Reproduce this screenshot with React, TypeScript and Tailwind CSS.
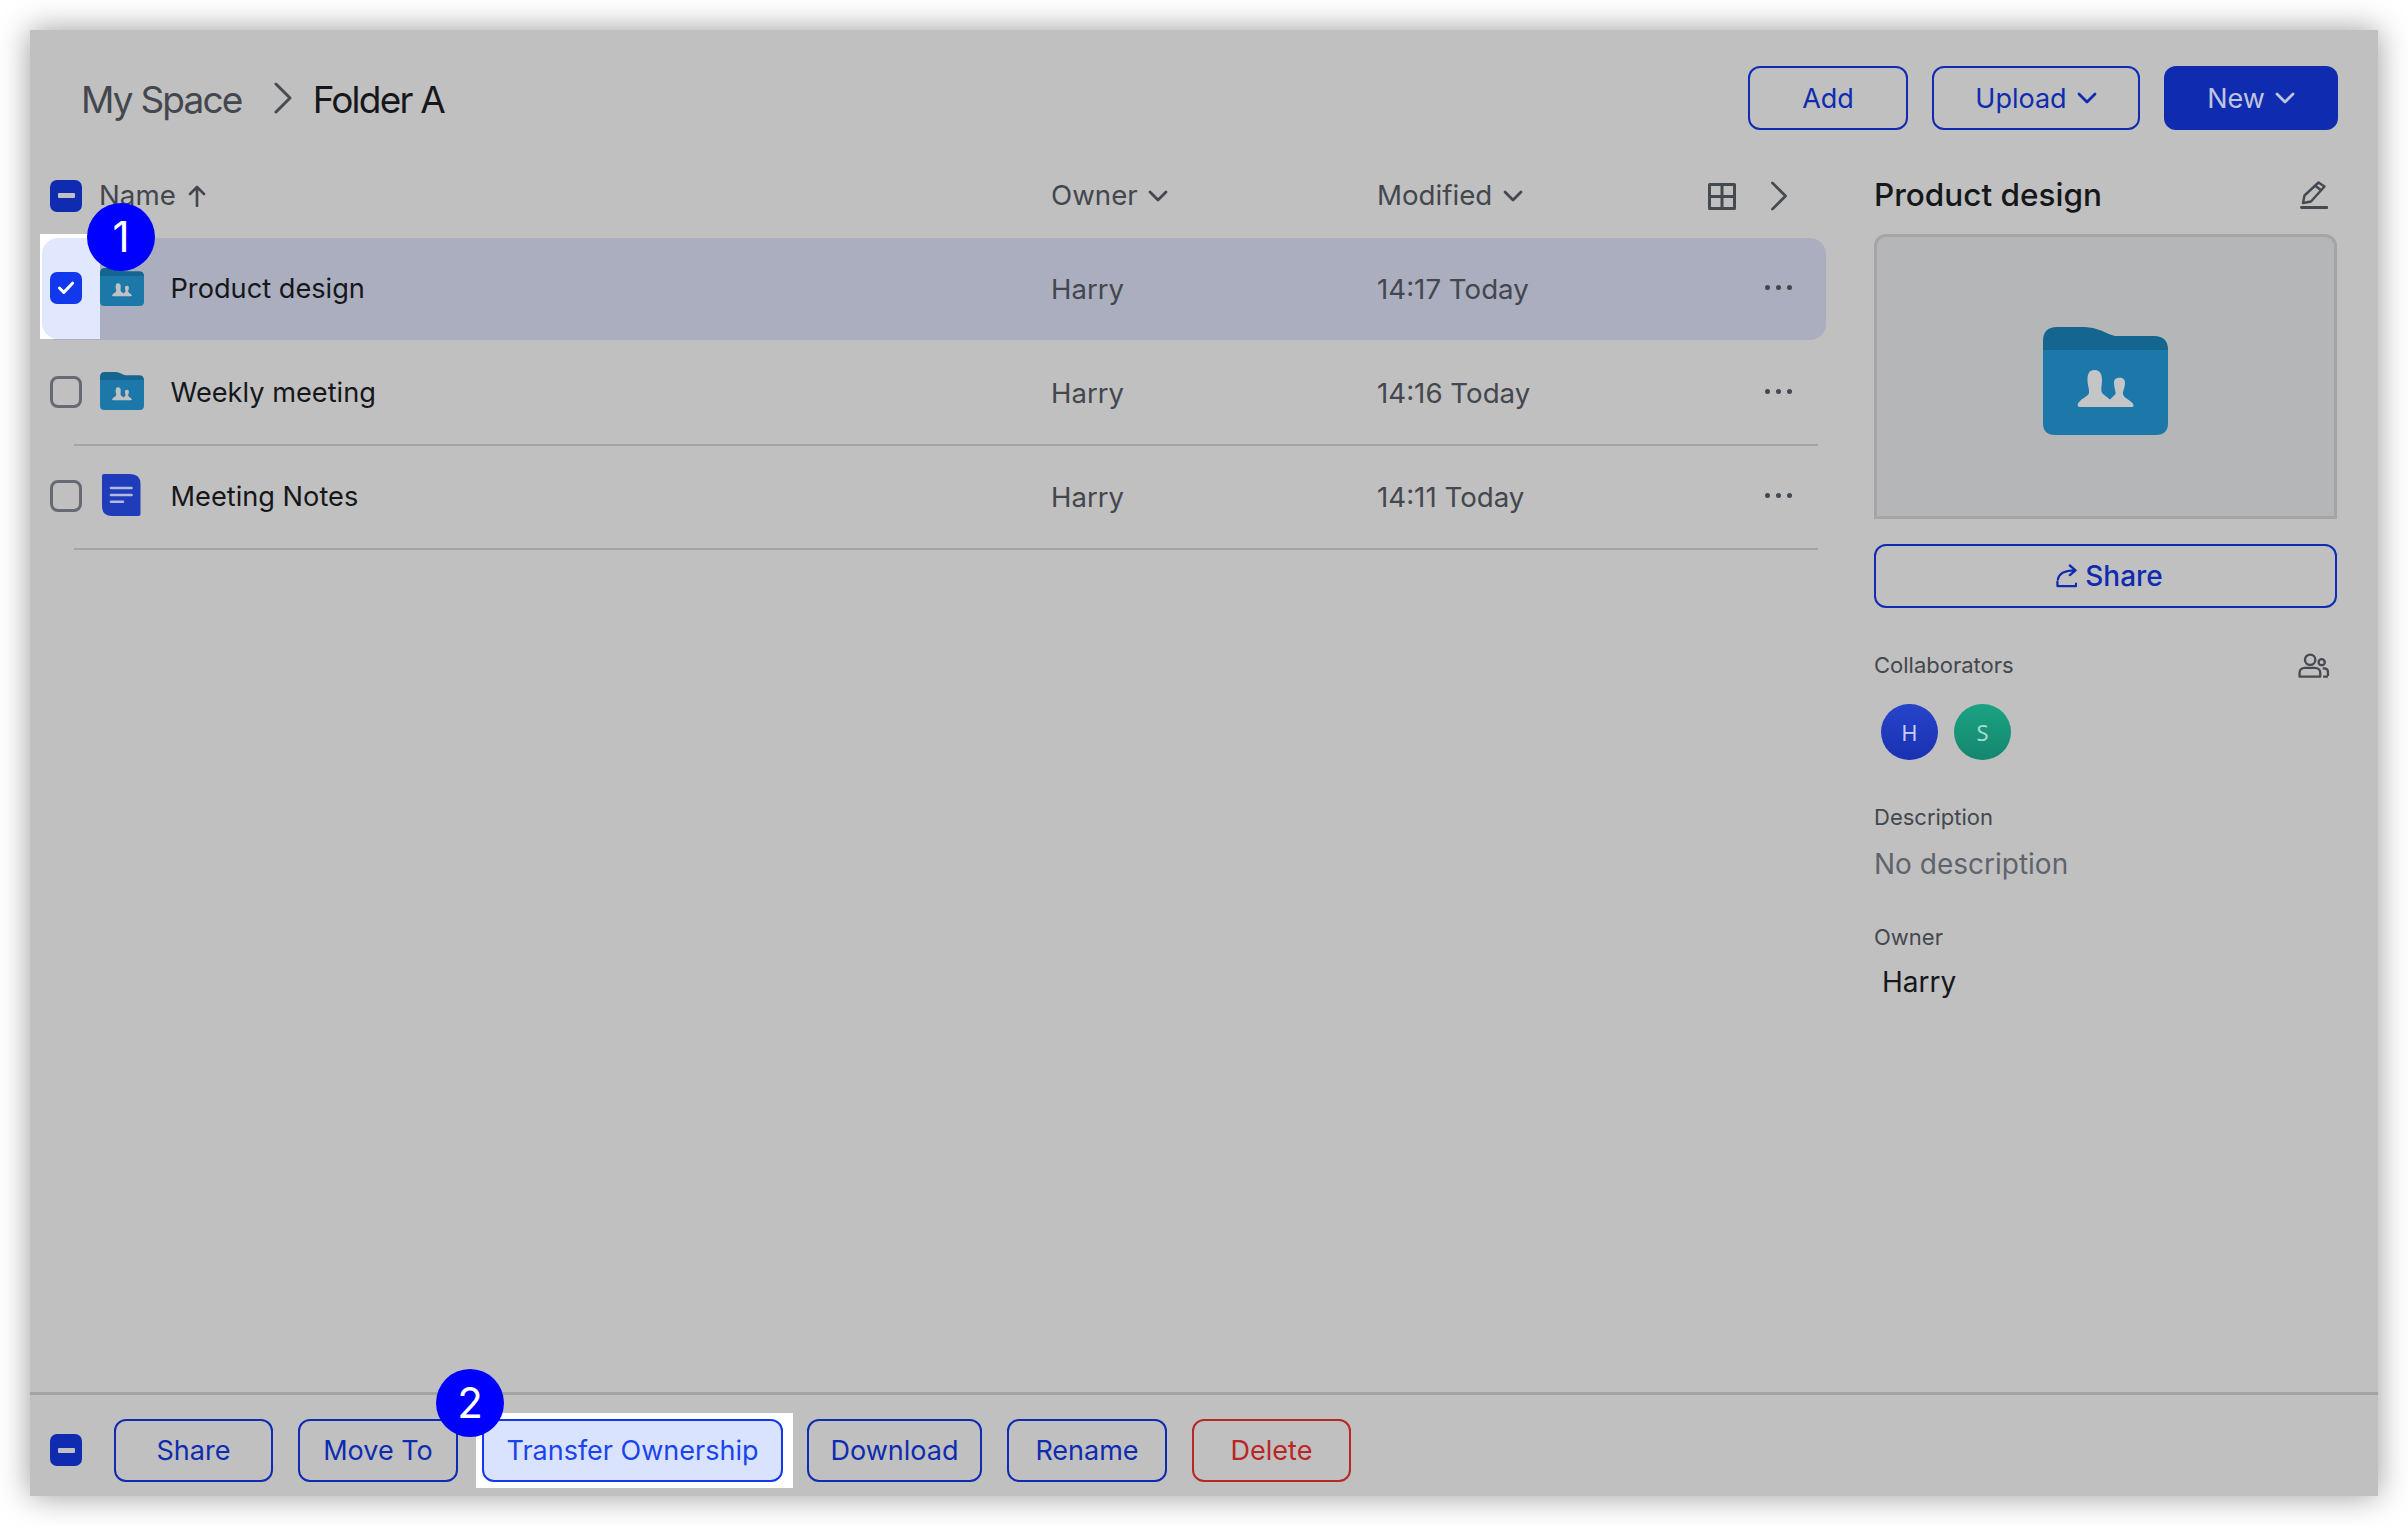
import React from "react";

const FONT = "font-['Inter','Liberation_Sans',sans-serif]";

function FolderIcon({ className, people = "#c0c1c2" }: { className: string; people?: string }) {
  return (
    <svg viewBox="0 0 125 108" className={className}>
      <path d="M0 25V14Q0 0 14 0H42Q50 0 58 3.5Q66 7.5 72 9H111Q125 9 125 23V25Z" fill="#14658f" />
      <path d="M0 23H125V96Q125 108 113 108H12Q0 108 0 96Z" fill="#1c78a8" />
      <path
        d="M51.6 43C45 43 44.5 49 44.5 53C44.5 59 46.5 62 46 66C45 70 36 72 34.5 78Q34.5 80 37 80H88Q91 80 90.5 78C89 73 81 72 80 67C79.5 64 82 61 82 56C82 53 81 50.7 76.5 50.7C72 50.7 71 53 71 56C71 61 73 64 72.5 67L67 72.5L60 67C57 64 59 59 59 53C59 49 58 43 51.6 43Z"
        fill={people}
      />
    </svg>
  );
}

function DocIcon() {
  return (
    <svg viewBox="0 0 39 42" className="w-[39px] h-[42px] -translate-x-[1px]">
      <path d="M0 2Q0 0 2 0H28Q38.5 0 38.5 10V40Q38.5 42 36.5 42H10Q0 42 0 32Z" fill="#1f3dbb" />
      <path d="M9 14H29.5M9 21H29.5M9 27.8H21" stroke="#b3bade" strokeWidth="2.6" strokeLinecap="round" fill="none" />
    </svg>
  );
}

function Chevron({ className, color = "#43474e" }: { className: string; color?: string }) {
  return (
    <svg viewBox="0 0 20 12" className={className} fill="none">
      <path d="M2 2L10 10L18 2" stroke={color} strokeWidth="2.8" strokeLinecap="round" strokeLinejoin="round" />
    </svg>
  );
}

function ChevronRight({ className }: { className: string }) {
  return (
    <svg viewBox="0 0 18 32" className={className} fill="none">
      <path d="M2 2L16 16L2 30" stroke="#474b52" strokeWidth="3" strokeLinecap="round" strokeLinejoin="round" />
    </svg>
  );
}

function Minus() {
  return (
    <div className="w-[32px] h-[32px] rounded-[7px] bg-[#0f2cb0] flex items-center justify-center shrink-0">
      <div className="w-[17px] h-[5px] rounded-[1px] bg-[#c0c0c0]" />
    </div>
  );
}

function Empty() {
  return <div className="w-[32px] h-[32px] rounded-[8px] border-[3px] border-[#666b73] shrink-0 -translate-y-[1px]" />;
}

function Checked() {
  return (
    <div className="relative z-10 w-[32px] h-[32px] rounded-[7px] bg-[#1238ee] flex items-center justify-center shrink-0 -translate-y-[1px]">
      <svg viewBox="0 0 20 16" className="w-[18px] h-[14px]" fill="none">
        <path d="M2.5 8L7.5 13L17.5 2.5" stroke="#ffffff" strokeWidth="3.4" strokeLinecap="round" strokeLinejoin="round" />
      </svg>
    </div>
  );
}

function Dots() {
  return (
    <div className="flex gap-[6px] pl-[57px] -translate-y-[2px]">
      <div className="w-[5px] h-[5px] rounded-full bg-[#43474e]" />
      <div className="w-[5px] h-[5px] rounded-full bg-[#43474e]" />
      <div className="w-[5px] h-[5px] rounded-full bg-[#43474e]" />
    </div>
  );
}

function Badge({ n, className }: { n: string; className: string }) {
  return (
    <div className={`absolute z-20 w-[68px] h-[68px] rounded-full bg-[#0000ff] text-white text-[42px] leading-none flex items-center justify-center ${className}`}>
      {n}
    </div>
  );
}

function Row({ icon, name, time, box }: { icon: React.ReactNode; name: string; time: string; box: React.ReactNode }) {
  return (
    <div className="grid grid-cols-[1010px_326px_331px_118px] items-center h-[102px] w-full">
      <div className="flex items-center pl-[9px] relative">
        {box}
        <div className="w-[44px] ml-[18px] flex items-center justify-center -translate-y-[2px]">{icon}</div>
        <span className="ml-[27px] text-[27.2px] leading-[36px] text-[#15171a] -translate-x-[0.5px]">{name}</span>
      </div>
      <span className="text-[27.5px] leading-[36px] text-[#43474e]">Harry</span>
      <span className="text-[27.7px] leading-[36px] text-[#43474e]">{time}</span>
      <Dots />
    </div>
  );
}

function ActionBtn({ label, w, red }: { label: string; w: string; red?: boolean }) {
  return (
    <button
      className={`${w} h-[63px] rounded-[12px] border-[2.5px] text-[27px] leading-none ${
        red ? "border-[#b82626] text-[#b82626]" : "border-[#0f2cb0] text-[#0f2cb0]"
      }`}
    >
      {label}
    </button>
  );
}

export default function App() {
  return (
    <div className={`${FONT} w-[2408px] h-[1526px] bg-white p-[30px] overflow-hidden`}>
      <div className="relative w-[2348px] h-[1466px] bg-[#c0c0c0] flex flex-col shadow-[0_0_30px_rgba(0,0,0,0.4)]">
        {/* Top bar */}
        <div className="h-[124px] shrink-0 pt-[36px] pl-[51px] pr-[40px] flex justify-between">
          <div className="flex items-center h-[63px] pt-[5px] text-[37px] tracking-[-1.8px]">
            <span className="text-[#43474e]">My Space</span>
            <ChevronRight className="w-[18px] h-[32px] ml-[32px] mr-[21px] -translate-y-[2px]" />
            <span className="text-[#15171a]">Folder A</span>
          </div>
          <div className="flex gap-[24px] text-[27px]">
            <button className="w-[160px] h-[64px] rounded-[12px] border-[2.5px] border-[#0f2cb0] text-[#0f2cb0] leading-none">Add</button>
            <button className="w-[208px] h-[64px] rounded-[12px] border-[2.5px] border-[#0f2cb0] text-[#0f2cb0] leading-none flex items-center justify-center gap-[10px]">
              Upload
              <Chevron className="w-[20px] h-[12px]" color="#0f2cb0" />
            </button>
            <button className="w-[174px] h-[64px] rounded-[12px] bg-[#0f2cb0] text-[#c0c4de] leading-none flex items-center justify-center gap-[10px]">
              New
              <Chevron className="w-[20px] h-[12px]" color="#c0c4de" />
            </button>
          </div>
        </div>

        {/* Main */}
        <div className="flex flex-1 min-h-0">
          {/* List */}
          <div className="relative ml-[11px] w-[1785px] shrink-0">
            <div className="grid grid-cols-[1010px_326px_331px_118px] items-center h-[84px] text-[27.7px] text-[#43474e]">
              <div className="flex items-center pl-[9px]">
                <Minus />
                <span className="ml-[17px]">Name</span>
                <svg viewBox="0 0 18 22" className="w-[18px] h-[22px] ml-[12px]" fill="none">
                  <path d="M9 21V2M2 9L9 2L16 9" stroke="#43474e" strokeWidth="2.6" strokeLinecap="round" strokeLinejoin="round" />
                </svg>
              </div>
              <div className="flex items-center gap-[10px]">
                Owner
                <Chevron className="w-[20px] h-[12px]" />
              </div>
              <div className="flex items-center gap-[11px]">
                Modified
                <Chevron className="w-[20px] h-[12px]" />
              </div>
              <div className="flex items-center gap-[34px]">
                <svg viewBox="0 0 28 27" className="w-[28px] h-[27px]" fill="none">
                  <path d="M1.5 1.5H26.5V25.5H1.5ZM14 1.5V25.5M1.5 13.5H26.5" stroke="#454950" strokeWidth="3" strokeLinejoin="round" />
                </svg>
                <ChevronRight className="w-[18px] h-[30px]" />
              </div>
            </div>

            <div className="relative bg-[#abaebf] rounded-[16px]">
              <div className="absolute -top-[4px] -left-[1px] w-[60px] h-[105px] bg-white pl-[2px] pt-[4px]">
                <div className="w-full h-full bg-[#e1e7fd] rounded-l-[16px]" />
              </div>
              <Row box={<Checked />} name="Product design" time="14:17 Today" icon={<FolderIcon className="relative z-0 w-[44px] h-[38px]" />} />
            </div>
            <div className="h-[2px]" />
            <Row box={<Empty />} name="Weekly meeting" time="14:16 Today" icon={<FolderIcon className="w-[44px] h-[38px]" />} />
            <div className="ml-[33px] mr-[8px] h-[2px] bg-[#a5a5a5]" />
            <Row box={<Empty />} name="Meeting Notes" time="14:11 Today" icon={<DocIcon />} />
            <div className="ml-[33px] mr-[8px] h-[2px] bg-[#a5a5a5]" />
          </div>

          {/* Details */}
          <div className="ml-[48px] w-[463px] shrink-0 flex flex-col">
            <div className="h-[80px] shrink-0 flex items-center justify-between">
              <span className="text-[31.5px] font-medium text-[#15171a] translate-y-[1px]">Product design</span>
              <svg viewBox="0 0 28 29" className="w-[28px] h-[29px] mr-[9px]" fill="none">
                <path d="M18.5 2.5L24.5 6.5L11 21.5L3 23L4.5 15.5ZM15.5 6L21.5 10.5" stroke="#454950" strokeWidth="2.4" strokeLinejoin="round" />
                <path d="M1.5 27.5H27" stroke="#454950" strokeWidth="2.8" strokeLinecap="round" />
              </svg>
            </div>
            <div className="h-[285px] shrink-0 border-[3px] border-[#a5a5a8] bg-[#b5b6b8] rounded-t-[12px] flex justify-center pt-[90px]">
              <FolderIcon className="w-[125px] h-[108px]" people="#c4c5c6" />
            </div>
            <button className="mt-[25px] h-[64px] shrink-0 rounded-[12px] border-[2.5px] border-[#0f2cb0] text-[#0f2cb0] text-[28px] font-medium leading-none flex items-center justify-center gap-[8px] pl-[8px]">
              <svg viewBox="0 0 22 25" className="w-[21px] h-[24px]" fill="none">
                <path d="M2 16C3 10 9 6.5 20 6.5M14.5 1.5L20.5 6.5L14.5 11.5M1.5 18.5V23H21V20.5" stroke="#0f2cb0" strokeWidth="2.4" strokeLinecap="round" strokeLinejoin="round" />
              </svg>
              Share
            </button>

            <div className="mt-[42px] h-[30px] flex items-center justify-between text-[22px] text-[#43474e]">
              Collaborators
              <svg viewBox="0 0 33 26" className="w-[32px] h-[25px] mr-[7px]" fill="none">
                <circle cx="12.5" cy="7" r="5.4" stroke="#454950" strokeWidth="2.4" />
                <path d="M1.5 24.5V20.5C1.5 17.5 4 15.5 7 15.5H17.5C20.5 15.5 23 17.5 23 20.5V24.5Z" stroke="#454950" strokeWidth="2.4" strokeLinejoin="round" />
                <circle cx="24.5" cy="9.5" r="3.2" stroke="#454950" strokeWidth="2.4" />
                <path d="M25.5 16H27C29.5 16 31 17.5 31 20V24M26 24.5H31" stroke="#454950" strokeWidth="2.4" strokeLinejoin="round" />
              </svg>
            </div>
            <div className="mt-[24px] ml-[7px] flex gap-[16px] font-['Noto_Sans',sans-serif] text-[22px]">
              <div className="w-[57px] h-[56px] rounded-full bg-gradient-to-b from-[#2744ca] to-[#1a30b2] text-[#c6cdf0] flex items-center justify-center">H</div>
              <div className="w-[57px] h-[56px] rounded-full bg-gradient-to-b from-[#1ba383] to-[#15866f] text-[#a6dccd] flex items-center justify-center">S</div>
            </div>
            <div className="mt-[42px] h-[30px] flex items-center text-[22px] text-[#43474e]">Description</div>
            <div className="mt-[14px] h-[36px] flex items-center text-[28px] text-[#5f646c]">No description</div>
            <div className="mt-[40px] h-[30px] flex items-center text-[22px] text-[#43474e]">Owner</div>
            <div className="mt-[12px] ml-[8px] h-[36px] flex items-center text-[28px] text-[#15171a]">Harry</div>
          </div>
        </div>

        {/* Action bar */}
        <div className="h-[104px] shrink-0 border-t-[3px] border-[#a3a3a3] pt-[9px] pl-[20px] flex items-center gap-[25px]">
          <div className="mr-[7px]">
            <Minus />
          </div>
          <ActionBtn label="Share" w="w-[159px]" />
          <ActionBtn label="Move To" w="w-[160px]" />
          <div className="-ml-[7px] -mr-[11px] bg-white pl-[6px] pr-[10px] py-[6px]">
            <button className="w-[301px] h-[63px] rounded-[12px] border-[2.5px] border-[#1238ee] bg-[#d9e3fe] text-[#1a44ee] text-[27px] leading-none">
              Transfer Ownership
            </button>
          </div>
          <ActionBtn label="Download" w="w-[175px]" />
          <ActionBtn label="Rename" w="w-[160px]" />
          <ActionBtn label="Delete" w="w-[159px]" red />
        </div>

        <Badge n="1" className="left-[57px] top-[173px]" />
        <Badge n="2" className="left-[406px] top-[1339px]" />
      </div>
    </div>
  );
}
